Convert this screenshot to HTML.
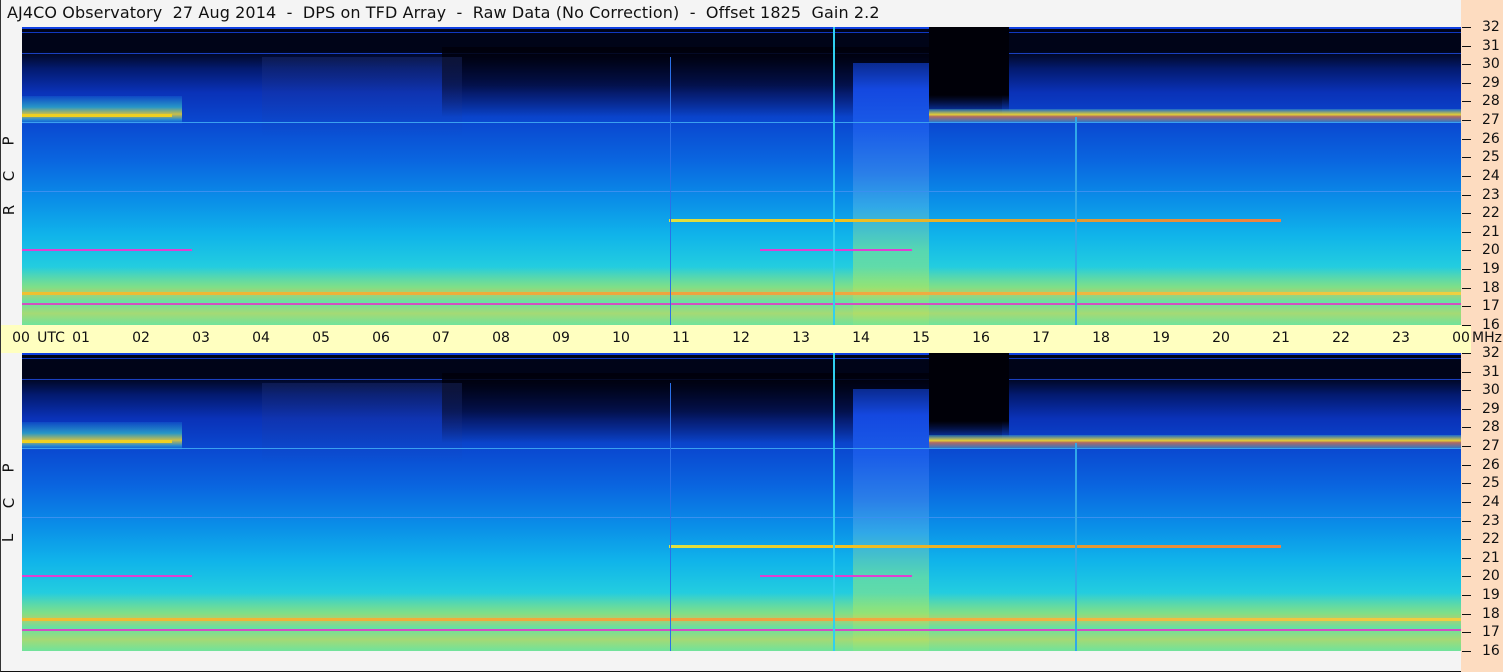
<!DOCTYPE html>
<html><head><meta charset="utf-8"><style>
*{margin:0;padding:0;box-sizing:border-box}
body{width:1503px;height:672px;background:#f4f4f4;position:relative;overflow:hidden;font-family:"DejaVu Sans","Liberation Sans",sans-serif;border-left:1px solid #333;border-bottom:1px solid #111}
.title{position:absolute;left:6px;top:3px;font-size:16px;color:#111;white-space:pre;letter-spacing:0.1px}
.rax{position:absolute;left:1460px;top:0;width:43px;height:672px;background:#fddcc0}
.panel{position:absolute;left:21px;width:1439px;height:298px;overflow:hidden;
background:linear-gradient(to bottom,#000418 0,#000418 8%,#031a70 14%,#0a32b8 22%,#0a48d0 32%,#0a66e0 45%,#0a8ee8 58%,#10b4ea 70%,#22cce0 80%,#40d8c8 88%,#60e0b0 95%,#70e4a0 100%)}
.o{position:absolute}
.utc{position:absolute;left:0;top:325px;width:1470px;height:28px;background:#ffffc0}
.utc span{position:absolute;top:5px;font-size:14px;color:#111;transform:translateX(-50%)}
.rl{position:absolute;left:1481px;font-size:14px;color:#111;transform:translateY(-50%)}
.tk{position:absolute;left:1461px;width:9px;height:1px;background:#111}
.side{position:absolute;left:3px;font-size:15px;color:#111;transform:rotate(-90deg)}
</style></head><body>
<div class="title">AJ4CO Observatory  27 Aug 2014  -  DPS on TFD Array  -  Raw Data (No Correction)  -  Offset 1825  Gain 2.2</div>
<div class="rax"></div>

<!-- TOP PANEL -->
<div class="panel" style="top:27px">
 <div class="o" style="left:0;top:0;width:1439px;height:2px;background:#1040e0"></div>
 <div class="o" style="left:0;top:5px;width:1439px;height:1px;background:#1038c0"></div>
 <div class="o" style="left:0;top:26px;width:1439px;height:1px;background:#1a40c0"></div>
 <div class="o" style="left:420px;top:20px;width:560px;height:70px;background:linear-gradient(to bottom,rgba(0,0,10,.9),rgba(0,0,20,.6) 55%,rgba(0,0,30,0))"></div>
 <div class="o" style="left:907px;top:0;width:80px;height:85px;background:linear-gradient(to bottom,#000008 80%,rgba(0,0,8,0))"></div>
 <div class="o" style="left:240px;top:30px;width:200px;height:80px;background:linear-gradient(to bottom,rgba(40,60,140,.3),rgba(40,60,140,0))"></div>
 <div class="o" style="left:831px;top:36px;width:76px;height:262px;background:linear-gradient(to bottom,#0a2a90 0,#1448e0 10%,#1a5ce8 25%,#2a7ee8 42%,#30a8e8 55%,#58d8b0 72%,#80e890 100%)"></div>
 <div class="o" style="left:0;top:69px;width:160px;height:28px;background:linear-gradient(to bottom,rgba(30,150,240,.2),rgba(60,210,200,.6) 40%,rgba(250,220,40,.8) 65%,rgba(60,200,220,.5) 85%,rgba(0,0,0,0))"></div>
 <div class="o" style="left:0;top:87px;width:150px;height:3px;background:#f0d020"></div>
 <div class="o" style="left:907px;top:82px;width:532px;height:14px;background:linear-gradient(to bottom,rgba(60,200,220,.3),rgba(250,220,40,.9) 40%,rgba(240,120,60,.7) 55%,rgba(60,200,220,.4))"></div>
 <div class="o" style="left:0;top:95px;width:1439px;height:1px;background:#3aa0f0"></div>
 <div class="o" style="left:0;top:164px;width:1439px;height:1px;background:#3a90f0"></div>
 <div class="o" style="left:647px;top:192px;width:612px;height:3px;background:linear-gradient(to right,#e0e040,#f0c020 30%,#e0a030 60%,#f08040)"></div>
 <div class="o" style="left:0;top:222px;width:170px;height:2px;background:#e040d0"></div>
 <div class="o" style="left:738px;top:222px;width:152px;height:2px;background:#e040d0"></div>
 <div class="o" style="left:0;top:240px;width:1439px;height:58px;background:linear-gradient(to bottom,rgba(90,230,160,0),rgba(180,230,80,.55) 35%,rgba(240,200,60,.6) 45%,rgba(120,230,140,.5) 60%,rgba(230,210,60,.5) 80%,rgba(110,225,150,.4))"></div>
 <div class="o" style="left:0;top:265px;width:1439px;height:3px;background:linear-gradient(to right,#f0c030,#f0a040 50%,#f0d040)"></div>
 <div class="o" style="left:0;top:276px;width:1439px;height:2px;background:#d050c0"></div>
 <div class="o" style="left:811px;top:0;width:2px;height:298px;background:#30d0f0"></div>
 <div class="o" style="left:648px;top:30px;width:1px;height:268px;background:#2a70e8"></div>
 <div class="o" style="left:1053px;top:90px;width:2px;height:208px;background:#30a8e8"></div>
</div>

<!-- UTC BAR -->
<div class="utc">
 <span style="left:20px">00</span><span style="left:50px">UTC</span>
 <span style="left:80px">01</span><span style="left:140px">02</span><span style="left:200px">03</span><span style="left:260px">04</span><span style="left:320px">05</span><span style="left:380px">06</span><span style="left:440px">07</span><span style="left:500px">08</span><span style="left:560px">09</span><span style="left:620px">10</span><span style="left:680px">11</span><span style="left:740px">12</span><span style="left:800px">13</span><span style="left:860px">14</span><span style="left:920px">15</span><span style="left:980px">16</span><span style="left:1040px">17</span><span style="left:1100px">18</span><span style="left:1160px">19</span><span style="left:1220px">20</span><span style="left:1280px">21</span><span style="left:1340px">22</span><span style="left:1400px">23</span><span style="left:1460px">00</span><span style="left:1486px">MHz</span>
</div>

<!-- BOTTOM PANEL -->
<div class="panel" style="top:353px">
 <div class="o" style="left:0;top:0;width:1439px;height:2px;background:#1040e0"></div>
 <div class="o" style="left:0;top:5px;width:1439px;height:1px;background:#1038c0"></div>
 <div class="o" style="left:0;top:26px;width:1439px;height:1px;background:#1a40c0"></div>
 <div class="o" style="left:420px;top:20px;width:560px;height:70px;background:linear-gradient(to bottom,rgba(0,0,10,.9),rgba(0,0,20,.6) 55%,rgba(0,0,30,0))"></div>
 <div class="o" style="left:907px;top:0;width:80px;height:85px;background:linear-gradient(to bottom,#000008 80%,rgba(0,0,8,0))"></div>
 <div class="o" style="left:240px;top:30px;width:200px;height:80px;background:linear-gradient(to bottom,rgba(40,60,140,.3),rgba(40,60,140,0))"></div>
 <div class="o" style="left:831px;top:36px;width:76px;height:262px;background:linear-gradient(to bottom,#0a2a90 0,#1448e0 10%,#1a5ce8 25%,#2a7ee8 42%,#30a8e8 55%,#58d8b0 72%,#80e890 100%)"></div>
 <div class="o" style="left:0;top:69px;width:160px;height:28px;background:linear-gradient(to bottom,rgba(30,150,240,.2),rgba(60,210,200,.6) 40%,rgba(250,220,40,.8) 65%,rgba(60,200,220,.5) 85%,rgba(0,0,0,0))"></div>
 <div class="o" style="left:0;top:87px;width:150px;height:3px;background:#f0d020"></div>
 <div class="o" style="left:907px;top:82px;width:532px;height:14px;background:linear-gradient(to bottom,rgba(60,200,220,.3),rgba(250,220,40,.9) 40%,rgba(240,120,60,.7) 55%,rgba(60,200,220,.4))"></div>
 <div class="o" style="left:0;top:95px;width:1439px;height:1px;background:#3aa0f0"></div>
 <div class="o" style="left:0;top:164px;width:1439px;height:1px;background:#3a90f0"></div>
 <div class="o" style="left:647px;top:192px;width:612px;height:3px;background:linear-gradient(to right,#e0e040,#f0c020 30%,#e0a030 60%,#f08040)"></div>
 <div class="o" style="left:0;top:222px;width:170px;height:2px;background:#e040d0"></div>
 <div class="o" style="left:738px;top:222px;width:152px;height:2px;background:#e040d0"></div>
 <div class="o" style="left:0;top:240px;width:1439px;height:58px;background:linear-gradient(to bottom,rgba(90,230,160,0),rgba(180,230,80,.55) 35%,rgba(240,200,60,.6) 45%,rgba(120,230,140,.5) 60%,rgba(230,210,60,.5) 80%,rgba(110,225,150,.4))"></div>
 <div class="o" style="left:0;top:265px;width:1439px;height:3px;background:linear-gradient(to right,#f0c030,#f0a040 50%,#f0d040)"></div>
 <div class="o" style="left:0;top:276px;width:1439px;height:2px;background:#d050c0"></div>
 <div class="o" style="left:811px;top:0;width:2px;height:298px;background:#30d0f0"></div>
 <div class="o" style="left:648px;top:30px;width:1px;height:268px;background:#2a70e8"></div>
 <div class="o" style="left:1053px;top:90px;width:2px;height:208px;background:#30a8e8"></div>
</div>

<div class="side" style="top:132px">P</div>
<div class="side" style="top:167px">C</div>
<div class="side" style="top:201px">R</div>
<div class="side" style="top:459px">P</div>
<div class="side" style="top:494px">C</div>
<div class="side" style="top:529px">L</div>

<div class="tk" style="top:27px"></div><div class="rl" style="top:27px">32</div>
<div class="tk" style="top:46px"></div><div class="rl" style="top:46px">31</div>
<div class="tk" style="top:64px"></div><div class="rl" style="top:64px">30</div>
<div class="tk" style="top:83px"></div><div class="rl" style="top:83px">29</div>
<div class="tk" style="top:101px"></div><div class="rl" style="top:101px">28</div>
<div class="tk" style="top:120px"></div><div class="rl" style="top:120px">27</div>
<div class="tk" style="top:139px"></div><div class="rl" style="top:139px">26</div>
<div class="tk" style="top:157px"></div><div class="rl" style="top:157px">25</div>
<div class="tk" style="top:176px"></div><div class="rl" style="top:176px">24</div>
<div class="tk" style="top:195px"></div><div class="rl" style="top:195px">23</div>
<div class="tk" style="top:213px"></div><div class="rl" style="top:213px">22</div>
<div class="tk" style="top:232px"></div><div class="rl" style="top:232px">21</div>
<div class="tk" style="top:250px"></div><div class="rl" style="top:250px">20</div>
<div class="tk" style="top:269px"></div><div class="rl" style="top:269px">19</div>
<div class="tk" style="top:288px"></div><div class="rl" style="top:288px">18</div>
<div class="tk" style="top:306px"></div><div class="rl" style="top:306px">17</div>
<div class="tk" style="top:325px"></div><div class="rl" style="top:325px">16</div>
<div class="tk" style="top:353px"></div><div class="rl" style="top:353px">32</div>
<div class="tk" style="top:372px"></div><div class="rl" style="top:372px">31</div>
<div class="tk" style="top:390px"></div><div class="rl" style="top:390px">30</div>
<div class="tk" style="top:409px"></div><div class="rl" style="top:409px">29</div>
<div class="tk" style="top:427px"></div><div class="rl" style="top:427px">28</div>
<div class="tk" style="top:446px"></div><div class="rl" style="top:446px">27</div>
<div class="tk" style="top:465px"></div><div class="rl" style="top:465px">26</div>
<div class="tk" style="top:483px"></div><div class="rl" style="top:483px">25</div>
<div class="tk" style="top:502px"></div><div class="rl" style="top:502px">24</div>
<div class="tk" style="top:521px"></div><div class="rl" style="top:521px">23</div>
<div class="tk" style="top:539px"></div><div class="rl" style="top:539px">22</div>
<div class="tk" style="top:558px"></div><div class="rl" style="top:558px">21</div>
<div class="tk" style="top:576px"></div><div class="rl" style="top:576px">20</div>
<div class="tk" style="top:595px"></div><div class="rl" style="top:595px">19</div>
<div class="tk" style="top:614px"></div><div class="rl" style="top:614px">18</div>
<div class="tk" style="top:632px"></div><div class="rl" style="top:632px">17</div>
<div class="tk" style="top:651px"></div><div class="rl" style="top:651px">16</div>
</body></html>
